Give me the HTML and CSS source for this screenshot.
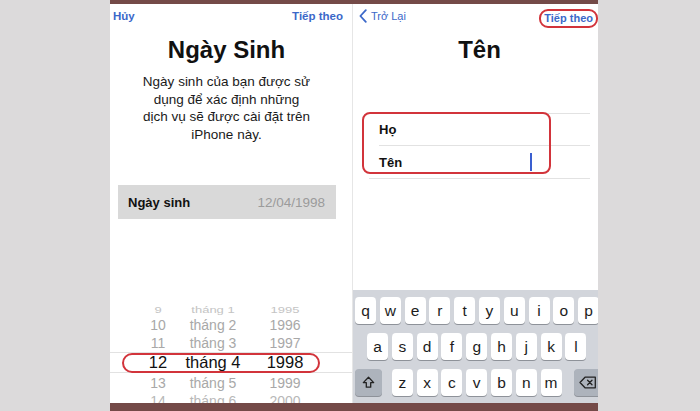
FILE: index.html
```html
<!DOCTYPE html>
<html lang="vi">

<head>
	<meta charset="UTF-8">
	<meta name="viewport" content="width=device-width, initial-scale=1.0">
	<title>Ngày Sinh - Tên</title>
	<link rel="stylesheet" href="styles.css">
</head>

<body>
	<div class="frame">
		<section class="screen screen-birth">
			<div class="head">
				<div class="nav">
					<span>Hủy</span>
					<span>Tiếp theo</span>
				</div>
				<h1>Ngày Sinh</h1>
				<p class="lead">Ngày sinh của bạn được sử<br>dụng để xác định những<br>dịch vụ sẽ được cài đặt trên<br>iPhone này.</p>
				<div class="date-row">
					<span>Ngày sinh</span>
					<span class="date-value">12/04/1998</span>
				</div>
			</div>

			<div class="picker">
				<div class="pick-row far"><span>9</span><span>tháng 1</span><span>1995</span></div>
				<div class="pick-row"><span>10</span><span>tháng 2</span><span>1996</span></div>
				<div class="pick-row"><span>11</span><span>tháng 3</span><span>1997</span></div>
				<div class="pick-row current">
					<span>12</span><span>tháng 4</span><span>1998</span>
					<div class="mark mark-picker"></div>
				</div>
				<div class="pick-row"><span>13</span><span>tháng 5</span><span>1999</span></div>
				<div class="pick-row last"><span>14</span><span>tháng 6</span><span>2000</span></div>
			</div>
		</section>

		<section class="screen screen-name">
			<div class="head">
				<div class="nav">
					<span class="back">
						<svg width="8" height="14" viewBox="0 0 8 14"><path d="M6.8 1.2 1.4 7l5.4 5.8" fill="none" stroke="#3b68c9" stroke-width="1.8" stroke-linecap="round" stroke-linejoin="round"/></svg>
						Trở Lại
					</span>
					<span class="next-marked">Tiếp theo</span>
				</div>
				<h1>Tên</h1>
			</div>

			<div class="name-form">
				<div class="field field-first">Họ</div>
				<div class="field field-last">Tên<span class="cursor"></span></div>
				<div class="mark mark-form"></div>
			</div>

			<div class="keyboard">
				<div class="key-row">
					<span class="key">q</span><span class="key">w</span><span class="key">e</span><span class="key">r</span><span class="key">t</span><span class="key">y</span><span class="key">u</span><span class="key">i</span><span class="key">o</span><span class="key">p</span>
				</div>
				<div class="key-row row-middle">
					<span class="key">a</span><span class="key">s</span><span class="key">d</span><span class="key">f</span><span class="key">g</span><span class="key">h</span><span class="key">j</span><span class="key">k</span><span class="key">l</span>
				</div>
				<div class="key-row row-bottom">
					<span class="key key-fn key-shift">
						<svg width="13" height="13" viewBox="0 0 13 13"><path d="M6.5 1.2 1.3 6.6h3v4.6h4.4V6.6h3z" fill="none" stroke="#222" stroke-width="1.3" stroke-linejoin="round"/></svg>
					</span>
					<span class="key">z</span><span class="key">x</span><span class="key">c</span><span class="key">v</span><span class="key">b</span><span class="key">n</span><span class="key">m</span>
					<span class="key key-fn key-back">
						<svg width="18" height="13" viewBox="0 0 18 13"><path d="M6 1.2h10.3v10.6H6L1 6.5z" fill="none" stroke="#222" stroke-width="1.3" stroke-linejoin="round"/><path d="M8.6 4.2l4.4 4.6M13 4.2 8.6 8.8" stroke="#222" stroke-width="1.3" stroke-linecap="round"/></svg>
					</span>
				</div>
			</div>
		</section>
	</div>
</body>

</html>
```

FILE: styles.css
```css
* {
	margin: 0;
	padding: 0;
	box-sizing: border-box;
}

html,
body {
	height: 411px;
	overflow: hidden;
}

body {
	background: #dcdadb;
	font-family: 'Liberation Sans', Arial, sans-serif;
	color: #111;
}

.frame {
	display: flex;
	width: 488px;
	height: 411px;
	margin-left: 110px;
	background: #fff;
	border-top: 4px solid #744a48;
	border-bottom: 8px solid #744a48;
}

.screen {
	display: flex;
	flex-direction: column;
	overflow: hidden;
}

.screen-birth {
	width: 243px;
	border-right: 1px solid #e6e6e6;
}

.screen-name {
	width: 245px;
}

.screen-birth .head {
	padding-right: 9px;
}

.screen-name .head {
	padding-left: 8px;
}

.nav {
	height: 24px;
	display: flex;
	justify-content: space-between;
	align-items: center;
	font-size: 11.5px;
	font-weight: bold;
	color: #3b68c9;
}

.screen-birth .nav {
	padding: 0 0 0 3px;
}

.back {
	display: flex;
	align-items: center;
	gap: 4px;
	margin-left: -2px;
	font-size: 11px;
	font-weight: normal;
}

.next-marked {
	height: 19px;
	margin-top: 4px;
	padding: 0 3px 0 3px;
	border: 2px solid #d2343b;
	border-radius: 9px;
	font-size: 11px;
	line-height: 15px;
}

h1 {
	margin-top: 8px;
	font-size: 24px;
	line-height: 28px;
	text-align: center;
}

.lead {
	margin-top: 9px;
	font-size: 13.5px;
	line-height: 17.6px;
	text-align: center;
	color: #1a1a1a;
}

.date-row {
	display: flex;
	justify-content: space-between;
	align-items: center;
	height: 34px;
	margin: 42px 7px 0 8px;
	padding: 0 11px 0 10px;
	background: #d9d9d9;
	font-size: 13px;
	font-weight: bold;
}

.date-value {
	font-weight: normal;
	font-size: 13.5px;
	color: #9b9b9b;
}

.picker {
	height: 101px;
	margin-top: auto;
	overflow: hidden;
}

.pick-row {
	display: grid;
	grid-template-columns: 40px 70px 74px;
	align-items: center;
	height: 19px;
	padding-left: 28px;
	font-size: 14px;
	text-align: center;
	color: #a8a8a8;
}

.pick-row:nth-child(2) {
	height: 17px;
}

.pick-row.far {
	height: 14px;
	font-size: 13px;
	color: #c4c4c4;
	transform: scaleY(0.7);
}

.pick-row.current {
	position: relative;
	height: 21px;
	border-top: 1px solid #e2e2e2;
	border-bottom: 1px solid #e2e2e2;
	font-size: 16.5px;
	color: #111;
}

.pick-row.current+.pick-row {
	height: 20px;
}

.pick-row.last {
	height: 10px;
	align-items: start;
	line-height: 16px;
	color: #b8b8b8;
}

.mark {
	position: absolute;
	border: 2px solid #d2343b;
}

.mark-picker {
	left: 12px;
	top: 0;
	width: 198px;
	height: 20px;
	border-radius: 10px;
}

.name-form {
	position: relative;
	margin: 49px 8px 0 16px;
	border-top: 1px solid #e2e2e2;
}

.field {
	position: relative;
	display: flex;
	align-items: center;
	height: 32px;
	border-bottom: 1px solid #e2e2e2;
	font-size: 13px;
	font-weight: bold;
}

.field-first {
	margin-left: 10px;
}

.field-last {
	height: 33px;
	padding-left: 10px;
}

.cursor {
	position: absolute;
	left: 161px;
	top: 7px;
	width: 2px;
	height: 18px;
	background: #3a5fd0;
}

.mark-form {
	left: -7px;
	top: -2px;
	width: 189px;
	height: 62px;
	border-radius: 8px;
}

.keyboard {
	height: 113px;
	margin-top: auto;
	padding: 7px 0 0 2px;
	background: #d2d5db;
	overflow: hidden;
}

.key-row {
	display: flex;
	gap: 3.8px;
	height: 27px;
	margin-bottom: 9px;
	white-space: nowrap;
}

.row-middle {
	padding-left: 12px;
}

.key {
	flex: none;
	display: flex;
	justify-content: center;
	align-items: center;
	width: 21px;
	height: 27px;
	background: #fff;
	border-radius: 4px;
	box-shadow: 0 1px 0 #8e9299;
	font-size: 15.5px;
	color: #1c1c1c;
}

.key-fn {
	width: 27px;
	background: #adb3bc;
}

.key-shift {
	margin-right: 6px;
}

.key-back {
	margin-left: 9px;
}
```
